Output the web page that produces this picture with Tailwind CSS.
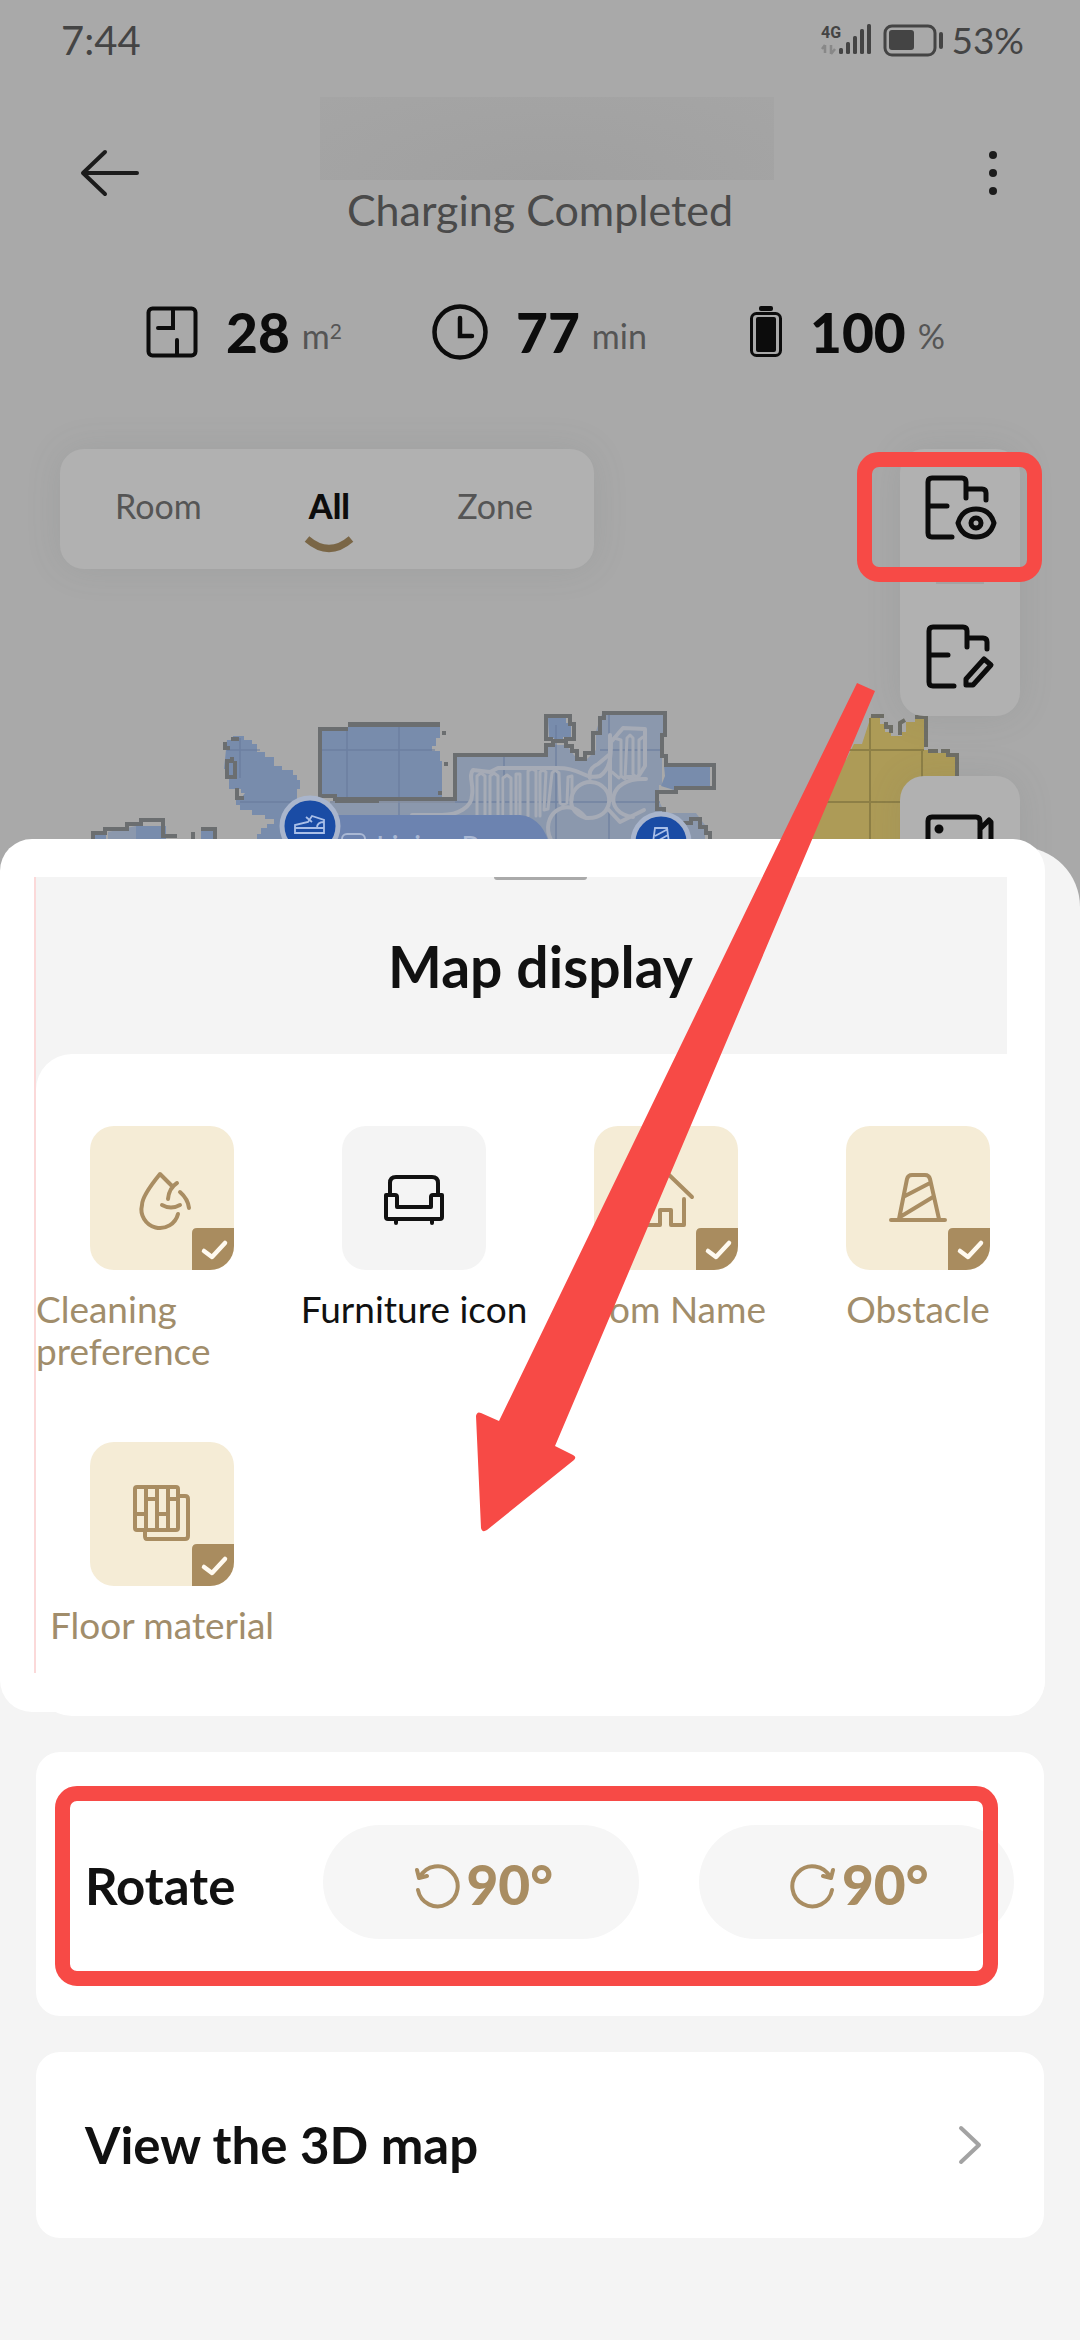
<!DOCTYPE html>
<html lang="en">
<head>
<meta charset="utf-8">
<meta name="viewport" content="width=device-width, initial-scale=1">
<title>Map display</title>
<script src="https://cdn.jsdelivr.net/npm/@tailwindcss/browser@4"></script>
</head>
<body class="relative flex min-h-screen flex-col overflow-x-hidden bg-[#a9a9a9] font-['Lato','Noto_Sans',sans-serif] text-[#111]">

<!-- Dimmed device page -->
<div class="relative flex h-[912px] flex-col">
  <div class="flex h-20 items-center justify-between pr-[56px] pl-[61px] text-[40px] leading-[48px] text-[#444]">
    <span>7:44</span>
    <div class="flex items-center gap-[6px]">
      <svg class="h-9 w-[124px]" viewBox="822 20 124 36" aria-hidden="true">
        <text x="822" y="36" font-size="16" font-weight="700" font-family="Roboto, sans-serif" fill="#444">4G</text>
        <path d="M826 51V43m0 0l-3 4M832 43v9m0 0l4-5" stroke="#888" stroke-width="2.5" fill="none"/>
        <g fill="#444"><rect x="840" y="46" width="4" height="6" rx="1.500"/><rect x="847" y="40" width="4" height="12" rx="1.500"/><rect x="854" y="34" width="4" height="18" rx="1.500"/><rect x="861" y="27" width="4" height="25" rx="1.500"/><rect x="868" y="22" width="4" height="30" rx="1.500"/>
        <rect x="890" y="28" width="25" height="20" rx="3"/><rect x="940" y="30" width="4" height="17" rx="2"/></g>
        <rect x="886" y="24" width="50" height="29" rx="7" fill="none" stroke="#444" stroke-width="3"/>
      </svg>
      <span class="text-[37px]">53%</span>
    </div>
  </div>

  <header class="flex items-start justify-between pr-[66px] pl-[80px] pt-[17px]">
    <button type="button" aria-label="Back" class="mt-[50px] h-[52px] w-[60px]">
      <svg viewBox="0 0 60 52" fill="none" stroke="#1c1c1c" stroke-width="4" stroke-linecap="round" stroke-linejoin="round" aria-hidden="true"><path d="M25 5L3 26l22 21M4 26h53"/></svg>
    </button>
    <div class="flex flex-col items-center">
      <div class="h-[83px] w-[454px] bg-[radial-gradient(ellipse_at_50%_100%,#a0a0a0,#a5a5a5)]"></div>
      <p class="mt-[3px] mr-[14px] text-[43px] leading-[54px] text-[#4a4a4a]">Charging Completed</p>
    </div>
    <button type="button" aria-label="More" class="mt-[50px] flex h-[52px] w-[60px] justify-center pl-[18px]">
      <svg class="h-[52px] w-4" viewBox="0 0 16 52" fill="#1c1c1c" aria-hidden="true"><circle cx="8" cy="8" r="4"/><circle cx="8" cy="26" r="4"/><circle cx="8" cy="44" r="4"/></svg>
    </button>
  </header>

  <div class="mt-[63px] grid grid-cols-[282px_318px_1fr] items-center pl-[146px] text-[55px] leading-[64px] font-black text-[#0c0c0c]">
    <div class="flex items-center">
      <svg class="mr-[28px] size-[52px]" viewBox="0 0 52 52" fill="none" stroke="#0c0c0c" stroke-width="4" stroke-linecap="round" aria-hidden="true"><rect x="2.500" y="2.500" width="47" height="47" rx="4"/><path d="M27 4v18H12M31 49V34"/></svg>
      28<span class="ml-3 pt-2 text-[34px] leading-[56px] font-normal text-[#555]">m<sup class="text-[21px]">2</sup></span>
    </div>
    <div class="flex items-center pl-1">
      <svg class="mr-[28px] size-[56px]" viewBox="0 0 56 56" fill="none" stroke="#0c0c0c" stroke-width="4.500" stroke-linecap="round" aria-hidden="true"><circle cx="28" cy="28" r="25.500"/><path d="M28 14v18h12"/></svg>
      77<span class="ml-3 pt-2 text-[34px] leading-[56px] font-normal text-[#555]">min</span>
    </div>
    <div class="flex items-center pl-1">
      <svg class="mr-[28px] h-[52px] w-8" viewBox="0 0 32 52" fill="#0c0c0c" aria-hidden="true"><rect x="9" y="0" width="14" height="5" rx="2"/><rect x="1.500" y="7.500" width="29" height="42" rx="5" fill="none" stroke="#0c0c0c" stroke-width="3"/><rect x="6" y="11" width="20" height="35" rx="2"/></svg>
      100<span class="ml-3 pt-2 text-[34px] leading-[56px] font-normal text-[#555]">%</span>
    </div>
  </div>

  <!-- Floor map -->
  <svg class="absolute inset-x-0 top-[690px] h-[160px] w-full" viewBox="0 690 1080 160" aria-hidden="true">
    <g fill="#788cac">
      <path d="M227 740h6v-4h11v4h8v4h5v8h8v5h9v9h8v4h11v5h4v5h3v9h-3v10l6 5 20 30v14h-70v-5h4v-9h4v-6h6v-4h7v-5h-9v-4h-13v-5h-12v-5h-4v-8h6l3-4h-4v-4h-12v-20h-5z"/>
      <path d="M320 728h28v-3h92v13h-4v8h-4v5h8v10h2v39H336v-6h-16z"/>
      <path d="M548 717h18v6h5v14h-8v6h-9v-5h-5zM94 835h12v5H94zM136 826h30v14h-30zM201 831h12v9h-12z"/>
    </g>
    <path fill="#8b98ad" d="M330 803h125v-48h91v-10h20l12 15h8l10-10v-19l7-20h61v22h-2v52h-3v16l6 12h31l9 12v25H330zM108 832l28-6v14h-28z"/>
    <path fill="#788cac" d="M664 766h46v20h-36v4l-13-4 4-10z"/>
    <g fill="none" stroke="#67799d" stroke-width="1.500" opacity=".7"><path d="M347 727v70M399 725v115M320 750h115M504 756v84M556 725v115M609 714v126M240 738v40M227 750h33M240 802h60M330 802h330M600 750h60"/></g>
    <g fill="none" stroke="#6b6e70" stroke-width="4">
      <path d="M348 729h-28v67h15v3h120v-44h91v-10h7v-4h13v5h6v5h5v8h8v-6h8v-20h7v-15h4v-5h61v22h-3v21h4v9h48v23h-38v4h-19v17h7v8h8v6h19v-4h9v8h6v6h4v24"/>
      <path d="M348 724.500h92" stroke-width="5"/><path d="M335 801h44M553 739h-7v-23h24v8h4v15h-10M93 840v-7h12v-4h22v-5h14v-4h22v16h14M193 840v-8M201 829h14v11M231 739h8M225 742v6h5M232 757v4h-5v16h8v-16M237 788v10h7M442 733h4M444 764h4M440 795v-4"/>
    </g>
    <g fill="none" stroke="#a6abb6" stroke-width="4" stroke-linejoin="round" stroke-linecap="round">
      <path d="M412 815h30c16 0 30-8 30-20 2-10-4-20 1-25l17 2 8-4h60c25 0 25 12 42 8 10-7 11-18 11-34l12-14 22 1v37l-7 11h-12"/>
      <path d="M610 735v66M590 778q-2-10 8-14l12-10"/>
    </g>
    <g fill="none" stroke="#a6abb6" stroke-width="3" stroke-linejoin="round" stroke-linecap="round">
      <path d="M477 816v-40l4-3 4 3v40M490 816v-40l4-3 4 3v40M503 816v-38l4-3 4 3v38M516 816v-42h4v42M528 816v-45l4-2 4 2v45M540 816v-44l3-2 3 2-2 38 4-1 4-36 3-3 4 3 1 30 3 2 4-2 1-26 4-1v24"/>
      <path d="M614 738l7 2v36l4 3 2-41 3-3 3 3v36l3 3 3-2v-35l4-3M619 778l-7-6"/>
    </g>
    <g fill="none" stroke="#a6abb6" stroke-width="4" stroke-linecap="round" stroke-linejoin="round">
      <path d="M586 818c-25-7-15-37 5-36 25 2 25 38-5 36M586 818c-20-25-47-2-35 22M646 779c-40-2-42 35-13 38M607 808l13 14 24-12"/>
    </g>
    <path d="M330 815h190q20 2 28 25H330z" fill="#6c83b0"/>
    <text x="376" y="858" font-size="30" fill="#a9b8d4">Living Room</text>
    <rect x="342" y="834" width="23" height="20" rx="5" fill="none" stroke="#a9b8d4" stroke-width="2"/>
    <g fill="#1a4ca5" stroke="#a9b5cc" stroke-width="5"><circle cx="310" cy="826" r="28"/><circle cx="661" cy="842" r="28"/></g>
    <g fill="none" stroke="#a9bfe8" stroke-width="1.800"><path d="M295 833v-8l13-3 4-6 12 4v13zM295 828h29M306 817l6 5M317 828q0-6 7-6M652 850l3-22h12l3 22M655 836l13-7M654 843l14-8"/></g>
    <path fill="#ad9b57" d="M871 716h9v8h5v8h6v4h11v-4h4v-10h9v-4h9v32h5v3h26v87H798l40-80h8l8-16h8z"/>
    <path fill="none" stroke="#8d7f46" stroke-width="2" d="M870 718v122M922 750v90M838 750h86M810 802h145"/>
    <path fill="none" stroke="#6e6e66" stroke-width="4" d="M871 716h13M886 722v5h5v6M900 735v-12l5-3M915 717h11v30M928 751h10M941 751h7v4h9v24"/>
  </svg>

  <div class="relative mt-[85px] flex items-start justify-between px-[60px]">
    <nav class="flex h-[120px] w-[534px] justify-between rounded-[24px] bg-[#b1b1b1] pr-[61px] pl-[55px] pt-9 text-[34px] leading-[42px] text-[#555] shadow-[0_0_36px_rgba(90,100,100,0.12)]">
      <button type="button" class="h-[42px]">Room</button>
      <button type="button" class="flex h-[70px] flex-col items-center font-black text-[#0c0c0c]">All
        <svg class="mt-2 h-5 w-[50px]" viewBox="0 0 50 20" fill="none" stroke="#7a6646" stroke-width="7" aria-hidden="true"><path d="M3 4q22 19 44 0"/></svg>
      </button>
      <button type="button" class="h-[42px]">Zone</button>
    </nav>
    <div class="flex w-[120px] flex-col gap-[60px]">
      <div class="flex h-[267px] flex-col rounded-[24px] bg-[#b1b1b1] shadow-[0_0_36px_rgba(90,100,100,0.12)]">
        <button type="button" aria-label="Map display" class="flex flex-1 items-center justify-center">
          <svg class="size-[84px]" viewBox="918 474 84 84" fill="none" stroke="#0c0c0c" stroke-width="5" stroke-linecap="round" stroke-linejoin="round" aria-hidden="true"><path d="M966 499v-16q0-4-4-4h-30q-4 0-4 4v51q0 4 4 4h20M929 507h18M968 490h14q4 0 4 4v7M958 524q4-14 18-14t18 14q-4 14-18 14t-18-14z"/><circle cx="976" cy="524" r="5"/></svg>
        </button>
        <div class="mx-auto h-[3px] w-12 bg-[#a3a3a3]"></div>
        <button type="button" aria-label="Edit map" class="flex flex-1 items-center justify-center">
          <svg class="size-[84px]" viewBox="918 609 84 84" fill="none" stroke="#0c0c0c" stroke-width="5" stroke-linecap="round" stroke-linejoin="round" aria-hidden="true"><path d="M967 648v-16q0-4-4-4h-30q-4 0-4 4v51q0 4 4 4h21M930 656h18M969 639h14q4 0 4 4v7M966 686v-6l18-20 7 6-18 20z"/></svg>
        </button>
      </div>
      <button type="button" aria-label="Camera" class="flex h-[120px] items-center justify-center rounded-[24px] bg-[#b1b1b1] shadow-[0_0_36px_rgba(90,100,100,0.12)]">
        <svg class="size-[72px]" viewBox="0 0 72 72" fill="none" stroke="#0c0c0c" stroke-width="5" stroke-linecap="round" stroke-linejoin="round" aria-hidden="true"><path d="M8 17h44q4 0 4 4v34q0 4-4 4H8q-4 0-4-4V21q0-4 4-4zM56 29l9-9 2 2v30l-11-7"/><circle cx="15" cy="29" r="2" fill="#0c0c0c"/></svg>
      </button>
    </div>
  </div>
</div>

<!-- Bottom sheet -->
<main class="relative -mt-[65px] flex flex-1 flex-col rounded-t-[60px] bg-[#f4f4f4]">
  <section class="relative -mt-2 mr-[35px] pt-[38px] pb-[43px]">
    <div class="absolute inset-x-0 top-0 bottom-1 rounded-[32px] bg-white"></div>
    <div class="absolute top-10 right-0 bottom-0 left-9 rounded-b-[36px] bg-white"></div>
    <div class="relative mr-[38px] ml-[34px] border-l-2 border-[#fbd9d9] bg-[linear-gradient(#f4f4f4,#f4f4f4)] bg-[length:60px_220px] bg-no-repeat">
      <div class="flex h-[177px] flex-col items-center bg-[#f4f4f4]">
        <div class="ml-[38px] h-[3px] w-[93px] rounded-b bg-[#aaa]"></div>
        <h1 class="mt-[53px] ml-[38px] text-[57px] leading-[66px] font-bold">Map display</h1>
      </div>
      <div class="-mr-[37px] grid grid-cols-4 gap-y-[68px] rounded-tl-[36px] bg-white pt-[72px] pb-[25px] text-[37px] leading-[42px] text-[#a18d6b]">
        <button type="button" aria-pressed="true" class="flex h-[248px] flex-col items-center justify-start gap-[18px]">
          <span class="relative flex size-[144px] items-center justify-center overflow-hidden rounded-[24px] bg-[#f5ecd6]">
            <svg class="size-[72px]" viewBox="0 0 72 72" fill="none" stroke="#a98d62" stroke-width="4" stroke-linecap="round" stroke-linejoin="round" aria-hidden="true"><path d="M46 24L34 12Q16 34 16 43a18 18 0 0 0 36 9M51 21Q43 26 42 37M54 30q8 7 9 16M36 43q9 5 18 0"/></svg>
            <svg class="absolute right-0 bottom-0 size-[42px]" viewBox="0 0 42 42" aria-hidden="true"><path d="M5 0H42V42H0V5q0-5 5-5z" fill="#a98c5f"/><path d="M12 23l8 6 13-14" fill="none" stroke="#fffaf0" stroke-width="4.500" stroke-linecap="round" stroke-linejoin="round"/></svg>
          </span>
          <span class="text-left">Cleaning preference</span>
        </button>
        <button type="button" aria-pressed="false" class="flex h-[248px] flex-col items-center justify-start gap-[18px] text-[#111]">
          <span class="relative flex size-[144px] items-center justify-center rounded-[24px] bg-[#f4f4f4]">
            <svg class="size-[72px]" viewBox="0 0 72 72" fill="none" stroke="#111" stroke-width="4" stroke-linecap="round" stroke-linejoin="round" aria-hidden="true"><path d="M12 32V21q0-6 6-6h36q6 0 6 6v11M8 33h9q2 0 2 2v10h34V35q0-2 2-2h9v22q0 2-2 2H10q-2 0-2-2zM18 58v3M54 58v3"/></svg>
          </span>
          <span>Furniture icon</span>
        </button>
        <button type="button" aria-pressed="true" class="flex h-[248px] flex-col items-center justify-start gap-[18px]">
          <span class="relative flex size-[144px] items-center justify-center overflow-hidden rounded-[24px] bg-[#f5ecd6]">
            <svg class="size-[72px]" viewBox="0 0 72 72" fill="none" stroke="#a98d62" stroke-width="4" stroke-linecap="round" stroke-linejoin="round" aria-hidden="true"><path d="M9 36l27-26 26 25M15 37v26h15V48h11v15h13V37"/></svg>
            <svg class="absolute right-0 bottom-0 size-[42px]" viewBox="0 0 42 42" aria-hidden="true"><path d="M5 0H42V42H0V5q0-5 5-5z" fill="#a98c5f"/><path d="M12 23l8 6 13-14" fill="none" stroke="#fffaf0" stroke-width="4.500" stroke-linecap="round" stroke-linejoin="round"/></svg>
          </span>
          <span>Room Name</span>
        </button>
        <button type="button" aria-pressed="true" class="flex h-[248px] flex-col items-center justify-start gap-[18px]">
          <span class="relative flex size-[144px] items-center justify-center overflow-hidden rounded-[24px] bg-[#f5ecd6]">
            <svg class="size-[72px]" viewBox="0 0 72 72" fill="none" stroke="#a98d62" stroke-width="4" stroke-linecap="round" stroke-linejoin="round" aria-hidden="true"><path d="M9 58h54M17 57l8-40q1-4 5-4h13q4 0 5 4l9 40M23 34l25-13M18 55l33-20"/></svg>
            <svg class="absolute right-0 bottom-0 size-[42px]" viewBox="0 0 42 42" aria-hidden="true"><path d="M5 0H42V42H0V5q0-5 5-5z" fill="#a98c5f"/><path d="M12 23l8 6 13-14" fill="none" stroke="#fffaf0" stroke-width="4.500" stroke-linecap="round" stroke-linejoin="round"/></svg>
          </span>
          <span>Obstacle</span>
        </button>
        <button type="button" aria-pressed="true" class="flex h-[206px] flex-col items-center justify-start gap-[18px]">
          <span class="relative flex size-[144px] items-center justify-center overflow-hidden rounded-[24px] bg-[#f5ecd6]">
            <svg class="size-[72px]" viewBox="0 0 72 72" fill="none" stroke="#a98d62" stroke-width="4" stroke-linecap="round" stroke-linejoin="round" aria-hidden="true"><rect x="9" y="9" width="43" height="43" rx="2"/><path d="M20 9v43M31 9v43M42 9v43M9 36h11M31 36h11M20 21h11M42 21h10M54 18h5q3 0 3 3v37q0 3-3 3H21q-2 0-2-3v-4"/></svg>
            <svg class="absolute right-0 bottom-0 size-[42px]" viewBox="0 0 42 42" aria-hidden="true"><path d="M5 0H42V42H0V5q0-5 5-5z" fill="#a98c5f"/><path d="M12 23l8 6 13-14" fill="none" stroke="#fffaf0" stroke-width="4.500" stroke-linecap="round" stroke-linejoin="round"/></svg>
          </span>
          <span>Floor material</span>
        </button>
      </div>
    </div>
  </section>

  <section class="relative mx-9 mt-9 flex h-[264px] items-center rounded-[24px] bg-white pr-[30px] pl-[49px]">
    <h2 class="w-[238px] pt-1 text-[51px] leading-[60px] font-bold">Rotate</h2>
    <div class="mb-1 grid flex-1 grid-cols-2 gap-[60px] text-[55px] leading-[66px] font-black text-[#a98d62]">
      <button type="button" class="flex h-[114px] items-center justify-center rounded-full bg-[#f6f6f6] pt-1 pl-1" aria-label="Rotate left 90 degrees">
        <svg class="mr-1 size-[50px]" viewBox="0 0 50 50" fill="none" stroke="#a98d62" stroke-width="4" stroke-linecap="round" stroke-linejoin="round" aria-hidden="true"><path d="M5 11l2 8 8-2M8 18a20 20 0 1 1-2 13"/></svg>90°
      </button>
      <button type="button" class="flex h-[114px] items-center justify-center rounded-full bg-[#f6f6f6] pt-1 pl-1" aria-label="Rotate right 90 degrees">
        <svg class="mr-1 size-[50px]" viewBox="0 0 50 50" fill="none" stroke="#a98d62" stroke-width="4" stroke-linecap="round" stroke-linejoin="round" aria-hidden="true"><path d="M45 11l-2 8-8-2M42 18a20 20 0 1 0 2 13"/></svg>90°
      </button>
    </div>
    <div class="pointer-events-none absolute top-[34px] right-[46px] bottom-[30px] left-[19px] rounded-[22px] border-[15px] border-[#f74a46]"></div>
  </section>

  <a href="#" class="mx-9 mt-9 flex h-[186px] items-center justify-between rounded-[24px] bg-white pr-[60px] pl-[49px] text-[51px] leading-[60px] font-bold">
    View the 3D map
    <svg class="h-10 w-[27px]" viewBox="0 0 27 40" fill="none" stroke="#a3a3a3" stroke-width="4" stroke-linecap="round" stroke-linejoin="round" aria-hidden="true"><path d="M4 3l18 17L4 37"/></svg>
  </a>
</main>

<!-- Callouts -->
<div class="pointer-events-none absolute top-[452px] right-[38px] h-[130px] w-[185px] rounded-[22px] border-[15px] border-[#f74a46]"></div>
<svg class="pointer-events-none absolute top-[680px] left-[44%] h-[856px] w-[410px]" viewBox="475 680 410 856" aria-hidden="true">
  <path d="M857 683L875 691L555 1446L573 1455Q577 1457 574 1460L487 1530Q482 1533 481 1528L476 1416Q477 1411 481 1413L499 1421L664 1080L790 820Z" fill="#f74a46"/>
</svg>
</body>
</html>
